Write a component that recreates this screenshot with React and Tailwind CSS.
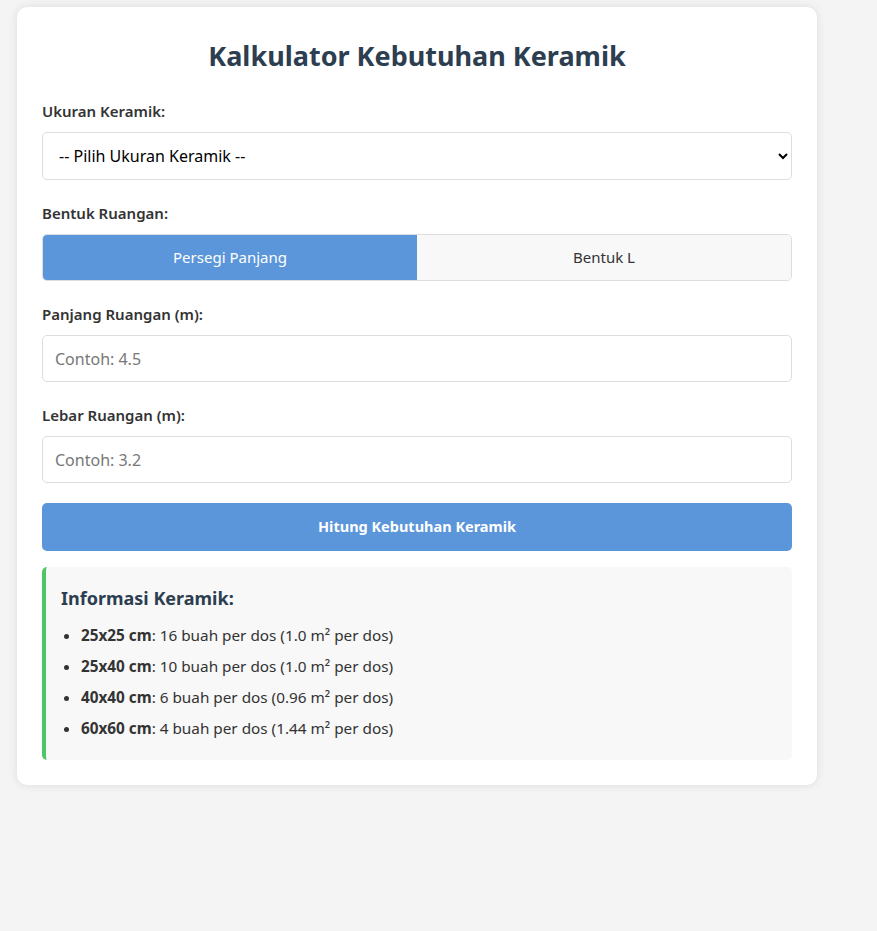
import React, { useState } from "react";

const tiles = [
  { size: "25x25 cm", pcs: 16, area: "1.0" },
  { size: "25x40 cm", pcs: 10, area: "1.0" },
  { size: "40x40 cm", pcs: 6, area: "0.96" },
  { size: "60x60 cm", pcs: 4, area: "1.44" },
];

export default function App() {
  const [shape, setShape] = useState("persegi");

  return (
    <div className="min-h-[931px] bg-[#f4f4f4] pt-[7px] pl-[17px] text-[#333] font-['Noto_Sans',sans-serif]">
      <div className="w-[800px] rounded-[10px] bg-white p-[25px] shadow-[0_0_10px_rgba(0,0,0,0.1)]">
        <h1 className="mb-[18px] text-center text-[27px] font-bold leading-[48px] text-[#2c3e50]">
          Kalkulator Kebutuhan Keramik
        </h1>

        <div className="mb-5">
          <label className="mb-2 block text-[15px] font-semibold leading-[26px]">Ukuran Keramik:</label>
          <select className="h-[48px] w-full rounded-[5px] border border-[#ddd] bg-white px-3 text-[16px] text-black">
            <option>-- Pilih Ukuran Keramik --</option>
            <option>25x25 cm</option>
            <option>25x40 cm</option>
            <option>40x40 cm</option>
            <option>60x60 cm</option>
          </select>
        </div>

        <div className="mb-5">
          <label className="mb-2 block text-[15px] font-semibold leading-[26px]">Bentuk Ruangan:</label>
          <div className="flex h-[47px] overflow-hidden rounded-[5px] border border-[#ddd]">
            <button
              onClick={() => setShape("persegi")}
              className={
                shape === "persegi"
                  ? "flex-1 bg-[#5b96db] text-[15px] text-white"
                  : "flex-1 bg-[#f8f8f8] text-[15px] text-[#333]"
              }
            >
              Persegi Panjang
            </button>
            <button
              onClick={() => setShape("L")}
              className={
                shape === "L"
                  ? "flex-1 bg-[#5b96db] text-[15px] text-white"
                  : "flex-1 bg-[#f8f8f8] text-[15px] text-[#333]"
              }
            >
              Bentuk L
            </button>
          </div>
        </div>

        <div className="mb-5">
          <label className="mb-2 block text-[15px] font-semibold leading-[26px]">Panjang Ruangan (m):</label>
          <input
            type="number"
            placeholder="Contoh: 4.5"
            className="h-[47px] w-full rounded-[5px] border border-[#ddd] px-3 text-[16px] placeholder:text-[#777] outline-none"
          />
        </div>

        <div className="mb-5">
          <label className="mb-2 block text-[15px] font-semibold leading-[26px]">Lebar Ruangan (m):</label>
          <input
            type="number"
            placeholder="Contoh: 3.2"
            className="h-[47px] w-full rounded-[5px] border border-[#ddd] px-3 text-[16px] placeholder:text-[#777] outline-none"
          />
        </div>

        <button className="h-[48px] w-full rounded-[5px] bg-[#5b96db] text-[14.5px] font-bold text-white">
          Hitung Kebutuhan Keramik
        </button>

        <div className="mt-4 rounded-[5px] border-l-4 border-[#4cc764] bg-[#f8f8f8] py-5 pl-[15px] pr-5">
          <h3 className="text-[18px] font-bold leading-[22px] text-[#2c3e50]">Informasi Keramik:</h3>
          <ul className="mt-[14px] list-disc pl-5 text-[15.3px]">
            {tiles.map((t, i) => (
              <li key={t.size} className={i < tiles.length - 1 ? "mb-[7px] leading-[24px]" : "leading-[24px]"}>
                <strong>{t.size}</strong>: {t.pcs} buah per dos ({t.area} m² per dos)
              </li>
            ))}
          </ul>
        </div>
      </div>
    </div>
  );
}
